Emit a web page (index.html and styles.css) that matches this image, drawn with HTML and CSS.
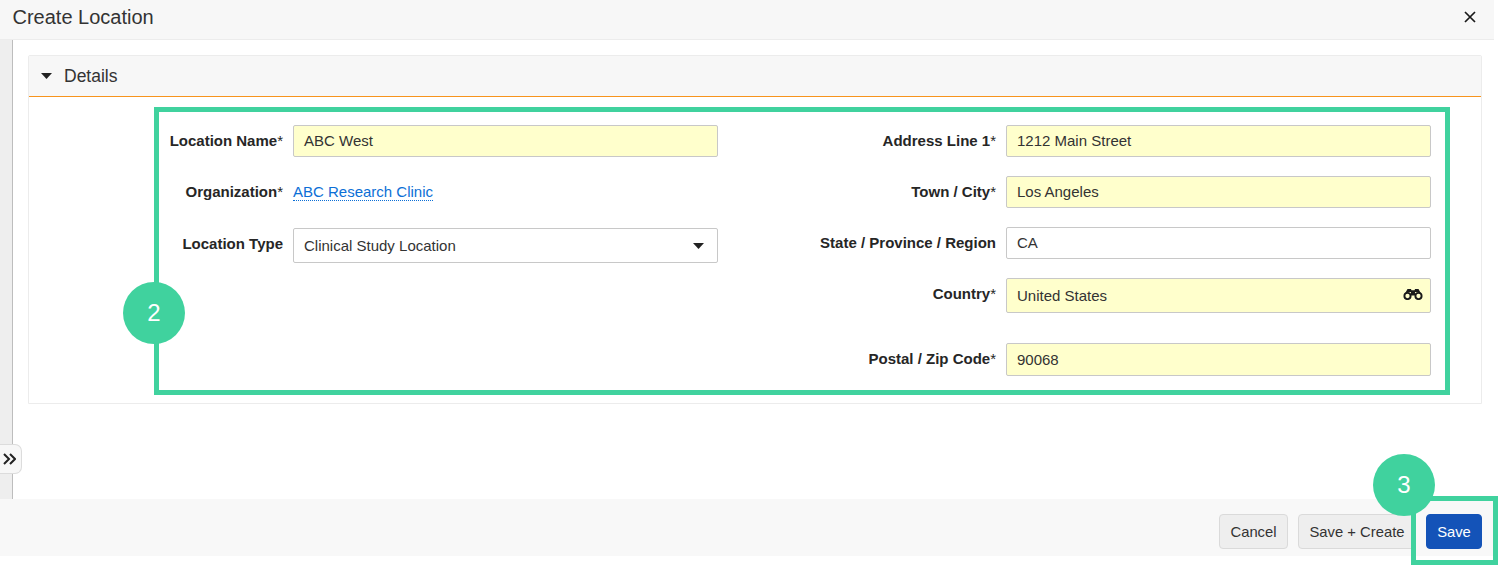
FILE: index.html
```html
<!DOCTYPE html>
<html lang="en">
<head>
<meta charset="utf-8">
<title>Create Location</title>
<link rel="stylesheet" href="styles.css">
</head>
<body>
<div class="page">
  <header class="top">
    <h1 class="title">Create Location</h1>
    <svg class="close" width="12" height="12" viewBox="0 0 12 12"><path d="M1 1l10 10M11 1L1 11" stroke="#1a1a1a" stroke-width="1.7" fill="none"/></svg>
  </header>
  <div class="middle">
    <div class="rail"></div>
    <main class="content">
      <section class="panel">
        <div class="panel-head">
          <svg class="caret" width="11" height="6" viewBox="0 0 11 6"><path d="M0 0h11L5.5 6z" fill="#222"/></svg>
          <span class="panel-title">Details</span>
        </div>
        <div class="form">
          <div class="col col-left">
            <div class="field"><label class="label">Location Name<span class="star">*</span></label><div class="input req">ABC West</div></div>
            <div class="field"><label class="label">Organization<span class="star">*</span></label><div class="static"><a class="link">ABC Research Clinic</a></div></div>
            <div class="field field-type"><label class="label">Location Type</label><div class="input tall">Clinical Study Location<svg class="select-caret" width="11" height="6" viewBox="0 0 11 6"><path d="M0 0h11L5.5 6z" fill="#222"/></svg></div></div>
          </div>
          <div class="col col-right">
            <div class="field"><label class="label">Address Line 1<span class="star">*</span></label><div class="input req">1212 Main Street</div></div>
            <div class="field"><label class="label">Town / City<span class="star">*</span></label><div class="input req">Los Angeles</div></div>
            <div class="field"><label class="label">State / Province / Region</label><div class="input">CA</div></div>
            <div class="field field-wide"><label class="label">Country<span class="star">*</span></label><div class="input req tall">United States<svg class="binoc" width="20" height="11" viewBox="0 0 20 11"><circle cx="4.500" cy="7" r="3.100" fill="none" stroke="#1a1a1a" stroke-width="1.900"/><circle cx="15.500" cy="7" r="3.100" fill="none" stroke="#1a1a1a" stroke-width="1.900"/><path d="M2 4.500L4.500 0h3.500l.5 1.500h3L12 0h3.500L18 4.500 14 3H6z" fill="#1a1a1a"/><path d="M8 1.500h4v5H8z" fill="#1a1a1a"/></svg></div></div>
            <div class="field"><label class="label">Postal / Zip Code<span class="star">*</span></label><div class="input req mid">90068</div></div>
          </div>
        </div>
      </section>
    </main>
  </div>
  <footer class="bottom">
    <button class="btn btn-cancel">Cancel</button>
    <button class="btn btn-more">Save + Create</button>
    <button class="btn btn-save">Save</button>
  </footer>
  <div class="strip"></div>

  <button class="toggle" aria-label="Expand"><svg width="13" height="12" viewBox="0 0 13 12"><path d="M1 1l5 5-5 5M7 1l5 5-5 5" stroke="#222" stroke-width="2" fill="none"/></svg></button>
  <div class="mark mark-form"></div>
  <div class="mark mark-save"></div>
  <div class="badge badge-2">2</div>
  <div class="badge badge-3">3</div>
</div>
</body>
</html>
```
FILE: styles.css
```css
* { box-sizing: border-box; }
html, body { margin: 0; padding: 0; height: 100%; background: #fff; overflow: hidden; }
body { font-family: "Liberation Sans", Arial, sans-serif; color: #2b2b2b; }
.page { position: relative; width: 1498px; height: 565px; padding-right: 4px; display: flex; flex-direction: column; }
.top { height: 40px; flex: none; background: #f7f7f7; border-bottom: 1px solid #ececec; display: flex; align-items: center; justify-content: space-between; padding: 0 18px 6px 12.500px; }
.title { margin: 0; font-size: 20px; font-weight: 400; line-height: 34px; color: #333; }
.close { display: block; }
.middle { flex: 1; display: flex; min-height: 0; }
.rail { width: 13px; flex: none; background: #eeeeee; border-right: 1px solid #bdbdbd; }
.content { flex: 1; padding: 15px 12px 0 15px; }
.panel { border: 1px solid #ececec; border-radius: 2px 2px 0 0; height: 349px; }
.panel-head { height: 41px; background: #f7f7f7; border-bottom: 1px solid #f7941d; display: flex; align-items: center; padding-left: 12px; }
.caret { display: block; margin-right: 12px; }
.panel-title { font-size: 17.500px; color: #333; line-height: 40px; }
.form { display: flex; padding-top: 28px; }
.col { display: flex; flex-direction: column; gap: 19px; }
.col-left { width: 689px; }
.col-right { width: 713px; }
.field { display: flex; gap: 10px; align-items: flex-start; }
.field-type { margin-top: 1px; }
.field-wide { margin-bottom: 11px; }
.label { flex: 1; text-align: right; font-size: 15px; font-weight: 700; line-height: 20px; padding-top: 6px; color: #262626; white-space: nowrap; }
.star { font-weight: 400; }
.input { width: 425px; flex: none; height: 32px; border: 1px solid #c8c8c8; border-radius: 2px; background: #fff; padding: 0 10px; font-size: 15px; line-height: 30px; color: #333; display: flex; align-items: center; justify-content: space-between; }
.req { background: #ffffcc; }
.tall { height: 35px; padding-top: 1px; }
.mid { height: 33px; }
.static { width: 425px; flex: none; height: 32px; display: flex; align-items: center; font-size: 15px; }
.link { color: #0c6fd6; border-bottom: 1px dotted #0c6fd6; line-height: 16px; }
.select-caret { display: block; margin-right: 3px; }
.binoc { display: block; margin-right: -3px; margin-top: -3px; }
.bottom { height: 57px; flex: none; background: #f8f8f8; display: flex; justify-content: flex-end; align-items: flex-start; gap: 10px; padding: 15px 12px 0 0; }
.btn { height: 35px; padding: 0; border: 1px solid #dadada; border-radius: 4px; background: #eeeeee; font-family: inherit; font-size: 14.800px; color: #333; text-align: center; }
.btn-cancel { width: 69px; }
.btn-more { width: 118px; }
.btn-save { width: 56px; background: #1453b8; border-color: #1453b8; color: #fff; }
.strip { height: 9px; flex: none; }
.toggle { position: absolute; left: 0; top: 444px; width: 22px; height: 30px; padding: 0 3px 0 0; background: #f7f7f7; border: 1px solid #dcdcdc; border-left: 0; border-radius: 0 7px 7px 0; display: flex; align-items: center; justify-content: center; }
.mark { position: absolute; border: 5px solid #40d29e; }
.mark-form { left: 154px; top: 107px; width: 1296px; height: 288px; }
.mark-save { left: 1411px; top: 496px; width: 87px; height: 69px; }
.badge { position: absolute; width: 62px; height: 62px; border-radius: 50%; background: #40d29e; color: #fff; font-size: 24px; display: flex; align-items: center; justify-content: center; }
.badge-2 { left: 123px; top: 282px; }
.badge-3 { left: 1373px; top: 454px; }
```
